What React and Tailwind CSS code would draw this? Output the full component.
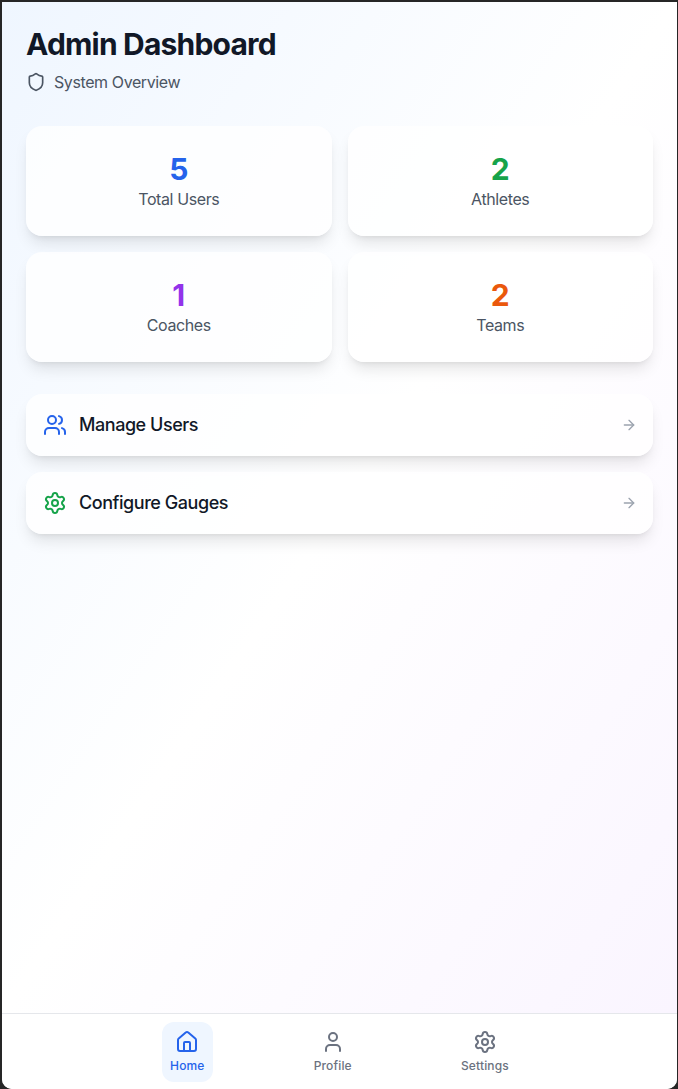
import React from "react";
import { Shield, Users, Settings, ArrowRight, Home, User } from "lucide-react";

const stats = [
  { value: "5", label: "Total Users", color: "text-[#2563eb]" },
  { value: "2", label: "Athletes", color: "text-[#16a34a]" },
  { value: "1", label: "Coaches", color: "text-[#9333ea]" },
  { value: "2", label: "Teams", color: "text-[#ea580c]" },
];

function ActionRow({ icon, label }) {
  return (
    <div className="flex h-[62px] items-center justify-between rounded-2xl bg-white/80 pl-[17px] pr-4 shadow-lg">
      <div className="flex items-center gap-3">
        {icon}
        <span className="text-lg font-medium leading-7 tracking-[-0.45px] text-[#111827]">{label}</span>
      </div>
      <ArrowRight className="h-4 w-4 text-[#9ca3af]" />
    </div>
  );
}

function NavItem({ icon, label, active }) {
  return (
    <div className={"flex h-[60px] flex-col items-center justify-center gap-1 rounded-xl px-2 " + (active ? "bg-[#eff6ff] text-[#2563eb]" : "text-[#6b7280]")}>
      {icon}
      <span className="text-xs font-medium leading-4 tracking-[0.15px]">{label}</span>
    </div>
  );
}

export default function App() {
  return (
    <div className="flex h-[1089px] w-[678px] flex-col overflow-hidden bg-[#262626] font-['Inter',sans-serif]">
      <div className="ml-[2px] mr-[1px] mt-[2px] flex flex-1 flex-col overflow-hidden rounded-b-[10px] bg-white">
        <main className="flex-1 bg-gradient-to-br from-[#eff6ff] via-white to-[#faf5ff] px-6 pt-6">
          <h1 className="text-3xl font-bold leading-9 tracking-[-0.8px] text-[#111827]">Admin Dashboard</h1>
          <div className="mt-2 flex items-center gap-2 text-[#4b5563]">
            <Shield className="h-5 w-5" />
            <span className="text-base leading-6 tracking-[-0.4px]">System Overview</span>
          </div>
          <div className="mt-8 grid grid-cols-2 gap-4">
            {stats.map((s) => (
              <div key={s.label} className="flex h-[110px] flex-col items-center justify-center rounded-2xl bg-white/80 shadow-lg">
                <div className={"text-3xl font-bold leading-9 " + s.color}>{s.value}</div>
                <div className="text-base leading-6 tracking-[-0.4px] text-[#4b5563]">{s.label}</div>
              </div>
            ))}
          </div>
          <div className="mt-8 flex flex-col gap-4">
            <ActionRow icon={<Users className="h-6 w-6 text-[#2563eb]" />} label="Manage Users" />
            <ActionRow icon={<Settings className="h-6 w-6 text-[#16a34a]" />} label="Configure Gauges" />
          </div>
        </main>
        <nav className="h-[76px] border-t border-[#e5e7eb] bg-white pt-2">
          <div className="mx-auto flex max-w-md items-start justify-around">
            <NavItem active icon={<Home className="h-6 w-6" />} label="Home" />
            <NavItem icon={<User className="h-6 w-6" />} label="Profile" />
            <NavItem icon={<Settings className="h-6 w-6" />} label="Settings" />
          </div>
        </nav>
      </div>
    </div>
  );
}
